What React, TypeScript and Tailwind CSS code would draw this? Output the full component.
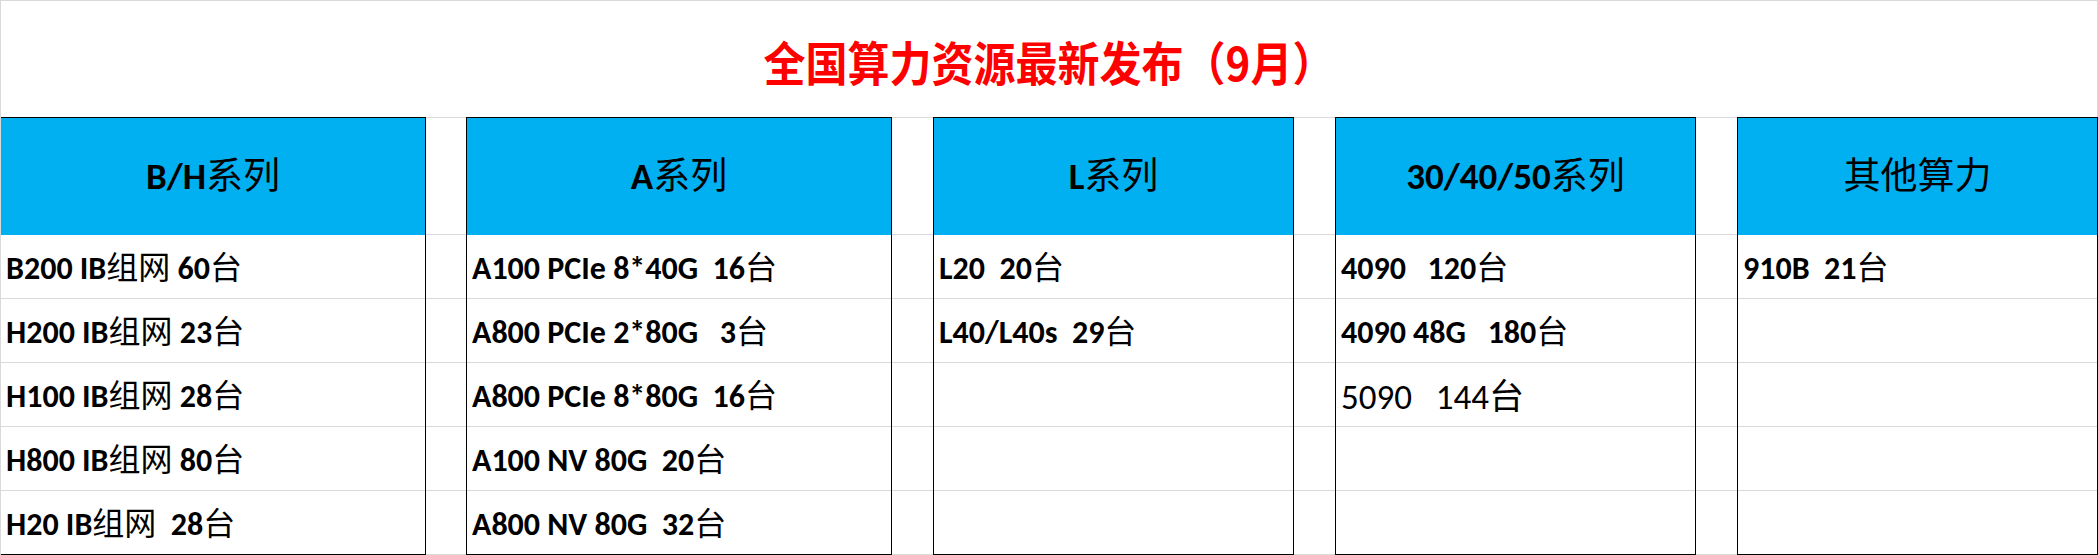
import React from 'react';

type Cell = { text: string; regular?: boolean };

const latin = "font-['Carlito','Liberation_Sans_Narrow','Lato','Noto_Sans_CJK_SC',sans-serif]";

const columns: { title: string; width: string; items: Cell[]; first?: boolean }[] = [
  {
    title: 'B/H系列',
    width: 'w-[425px]',
    first: true,
    items: [
      { text: 'B200 IB组网 60台' },
      { text: 'H200 IB组网 23台' },
      { text: 'H100 IB组网 28台' },
      { text: 'H800 IB组网 80台' },
      { text: 'H20 IB组网  28台' },
    ],
  },
  {
    title: 'A系列',
    width: 'w-[426px]',
    items: [
      { text: 'A100 PCIe 8*40G  16台' },
      { text: 'A800 PCIe 2*80G   3台' },
      { text: 'A800 PCIe 8*80G  16台' },
      { text: 'A100 NV 80G  20台' },
      { text: 'A800 NV 80G  32台' },
    ],
  },
  {
    title: 'L系列',
    width: 'w-[361px]',
    items: [{ text: 'L20  20台' }, { text: 'L40/L40s  29台' }],
  },
  {
    title: '30/40/50系列',
    width: 'w-[361px]',
    items: [
      { text: '4090   120台' },
      { text: '4090 48G   180台' },
      { text: '5090   144台', regular: true },
    ],
  },
  {
    title: '其他算力',
    width: 'w-[361px]',
    items: [{ text: '910B  21台' }],
  },
];

const gaps = ['w-[40px]', 'w-[41px]', 'w-[41px]', 'w-[41px]'];

// latin parts bold, CJK parts in normal weight like the sheet's fallback font
function Runs({ text }: { text: string }) {
  const parts = text.split(/([\u3000-\u9fff\uff00-\uffef]+)/).filter(Boolean);
  return (
    <>
      {parts.map((p, i) =>
        /[\u3000-\u9fff]/.test(p) ? (
          <span key={i} className="font-normal">{p}</span>
        ) : (
          <span key={i}>{p}</span>
        )
      )}
    </>
  );
}

function Gap({ width }: { width: string }) {
  return (
    <div className={`${width} shrink-0 flex flex-col`}>
      <div className="h-[118px] border-t border-b border-[#d9d9d9]" />
      {[0, 1, 2, 3, 4].map((i) => (
        <div key={i} className="h-[64px] border-b border-[#d9d9d9]" />
      ))}
    </div>
  );
}

function Column({ col }: { col: (typeof columns)[number] }) {
  const rows: (Cell | null)[] = [0, 1, 2, 3, 4].map((i) => col.items[i] ?? null);
  return (
    <div
      className={`${col.width} shrink-0 h-[438px] flex flex-col border-t border-b border-r border-black ${
        col.first ? '' : 'border-l'
      }`}
    >
      <div className="h-[117px] shrink-0 bg-[#00b0f0] flex items-center justify-center">
        <span className={`${latin} text-[37px] font-bold text-black whitespace-pre leading-none`}>
          <Runs text={col.title} />
        </span>
      </div>
      {rows.map((r, i) => (
        <div
          key={i}
          className={`flex-1 flex items-center pl-[5px] pt-[5px] ${i < 4 ? 'border-b border-[#d9d9d9]' : ''}`}
        >
          {r && (
            <span
              className={`${latin} whitespace-pre leading-none text-black ${
                r.regular ? 'text-[35px] font-normal' : 'text-[32px] font-bold'
              }`}
            >
              <Runs text={r.text} />
            </span>
          )}
        </div>
      ))}
    </div>
  );
}

export default function App() {
  return (
    <div className="w-[2098px] h-[555px] bg-white flex flex-col overflow-hidden">
      {/* Title */}
      <div className="h-[117px] shrink-0 border-t border-x border-[#d9d9d9] flex items-center justify-center pt-[4px]">
        <h1 className="text-[42px] font-bold text-[#ff0000] leading-none font-['Noto_Sans_CJK_SC',sans-serif] scale-y-110">
          全国算力资源最新发布（9月）
        </h1>
      </div>

      {/* Series tables */}
      <div className="flex border-l border-[#d9d9d9]">
        {columns.map((col, i) => (
          <React.Fragment key={col.title}>
            <Column col={col} />
            {i < gaps.length && <Gap width={gaps[i]} />}
          </React.Fragment>
        ))}
      </div>
    </div>
  );
}
